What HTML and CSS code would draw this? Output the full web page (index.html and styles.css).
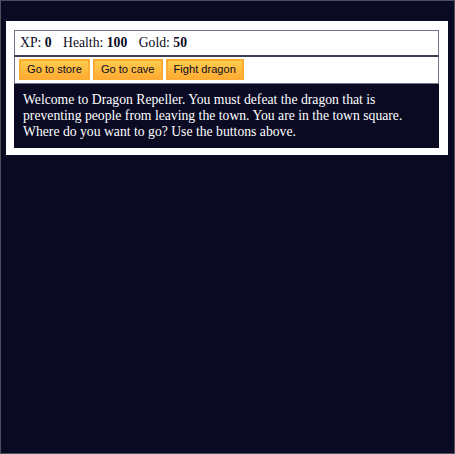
FILE: index.html
```html
<!DOCTYPE html>
<html lang="en">
<head>
<meta charset="utf-8">
<title>RPG - Dragon Repeller</title>
<link rel="stylesheet" href="styles.css">
</head>
<body>
<div class="game">
  <div class="stats">
    <span class="stat">XP: <strong>0</strong></span>
    <span class="stat">Health: <strong>100</strong></span>
    <span class="stat">Gold: <strong>50</strong></span>
  </div>
  <div class="controls">
    <button class="btn">Go to store</button>
    <button class="btn">Go to cave</button>
    <button class="btn">Fight dragon</button>
  </div>
  <div class="text">Welcome to Dragon Repeller. You must defeat the dragon that is preventing people from leaving the town. You are in the town square. Where do you want to go? Use the buttons above.</div>
</div>
</body>
</html>
```

FILE: styles.css
```css
html {
  height: 100%;
  box-sizing: border-box;
  border: 1px solid #4e4e5e;
  background-color: #0a0a23;
}

body {
  margin: 0;
  padding: 20px 6px 0 5px;
  font-family: "Liberation Serif", "Times New Roman", serif;
  font-size: 13.7px;
  line-height: 16px;
}

.game {
  background-color: #ffffff;
  padding: 9px 9px 7px 8px;
}

.stats,
.controls {
  border: 1px solid #75758a;
  color: #0a0a23;
}

.stats {
  padding: 4px 5px;
  border-bottom-color: #3e3e52;
}

.stat {
  padding-right: 8px;
}

.controls {
  border-top-color: #3e3e52;
  display: flex;
  gap: 3px;
  padding: 2px 4px 3px;
}

.btn {
  font-family: "Liberation Sans", Arial, sans-serif;
  font-size: 11.1px;
  line-height: 13px;
  color: #0a0a23;
  background-color: #feac32;
  background-image: linear-gradient(#fecc4c, #ffac33);
  border: 2px solid #feac32;
  padding: 2px 6px;
  margin: 0;
  cursor: pointer;
}

.text {
  background-color: #0a0a23;
  color: #ffffff;
  padding: 8px 9px;
}
```
